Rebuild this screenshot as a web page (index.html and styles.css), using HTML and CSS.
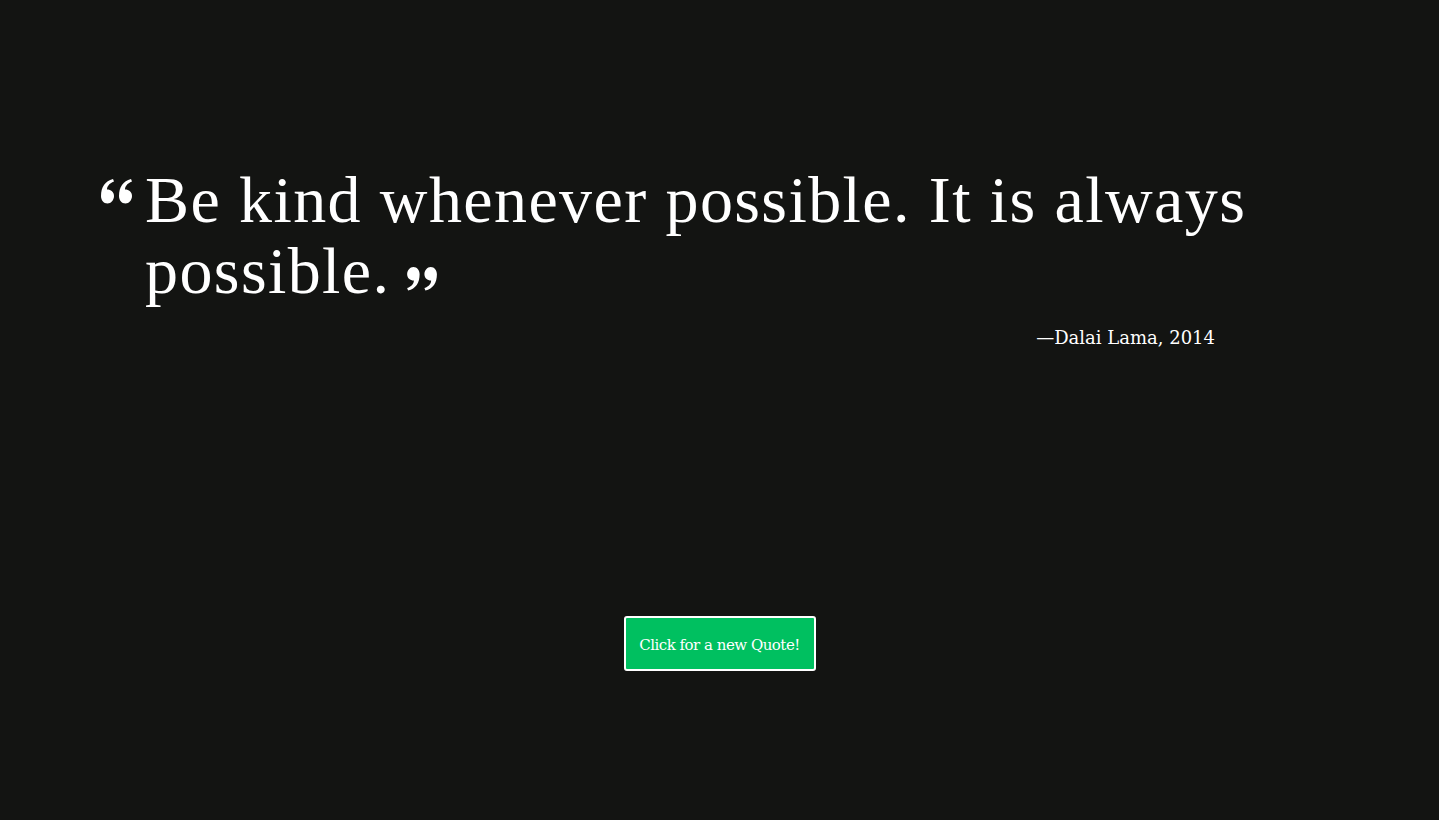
FILE: index.html
```html
<!DOCTYPE html>
<html>
<head>
<meta charset="utf-8">
<link rel="stylesheet" href="styles.css">
</head>
<body>
<main class="page">
  <section class="quote-box">
    <div class="quote-row">
      <svg class="q-left" viewBox="0 0 32 25" width="32" height="25"><path fill="#fff" d="M0 17 C0 8 4 2 12 0 L13 2.5 C8 4.5 6 7.5 6 10.5 C10 10.5 13 13 13 17 C13 21 10 24.5 6.5 24.5 C2.5 24.5 0 21 0 17 Z M18 17 C18 8 22 2 30 0 L31 2.5 C26 4.5 24 7.5 24 10.5 C28 10.5 31 13 31 17 C31 21 28 24.5 24.5 24.5 C20.5 24.5 18 21 18 17 Z"/></svg>
      <p class="quote-text">Be kind whenever possible. It is always possible.<svg class="q-right" viewBox="0 0 32 25" width="31" height="24"><path fill="#fff" d="M13 7.5 C13 16.5 9 22.5 1 24.5 L0 22 C5 20 7 17 7 14 C3 14 0 11.5 0 7.5 C0 3.5 3 0 6.5 0 C10.5 0 13 3.5 13 7.5 Z M31 7.5 C31 16.5 27 22.5 19 24.5 L18 22 C23 20 25 17 25 14 C21 14 18 11.5 18 7.5 C18 3.5 21 0 24.5 0 C28.5 0 31 3.5 31 7.5 Z"/></svg></p>
    </div>
    <p class="author">—Dalai Lama, 2014</p>
  </section>
  <div class="actions">
    <button class="new-quote">Click for a new Quote!</button>
  </div>
</main>
</body>
</html>
```
FILE: styles.css
```css
html, body {
  margin: 0;
  padding: 0;
  background: #131412;
  height: 100%;
}
.page {
  height: 820px;
  display: flex;
  flex-direction: column;
  font-family: "Liberation Serif", "DejaVu Serif", serif;
  color: #fff;
}
.quote-box {
  padding: 176px 0 0 100px;
  width: 1115px;
}
.quote-row {
  display: flex;
  align-items: flex-start;
  gap: 12px;
}
.q-left {
  flex: none;
  margin-top: 3px;
  margin-left: 1px;
}
.quote-text {
  flex: none;
  margin: 0;
  font-size: 66px;
  line-height: 71px;
  letter-spacing: 1.4px;
  width: 1180px;
  margin-top: -12px;
}
.q-right {
  margin-left: 17px;
  vertical-align: 2px;
}
.author {
  margin: 20px 0 0;
  text-align: right;
  font-family: "DejaVu Serif", serif;
  font-size: 18px;
  line-height: 23px;
}
.actions {
  display: flex;
  justify-content: center;
  margin-top: 267px;
}
.new-quote {
  background: #00c060;
  color: #fff;
  border: 2px solid #fff;
  border-radius: 3px;
  width: 192px;
  height: 55px;
  font-family: "DejaVu Serif", serif;
  font-size: 15px;
  letter-spacing: -0.5px;
  padding: 2px 0 0;
}
```
